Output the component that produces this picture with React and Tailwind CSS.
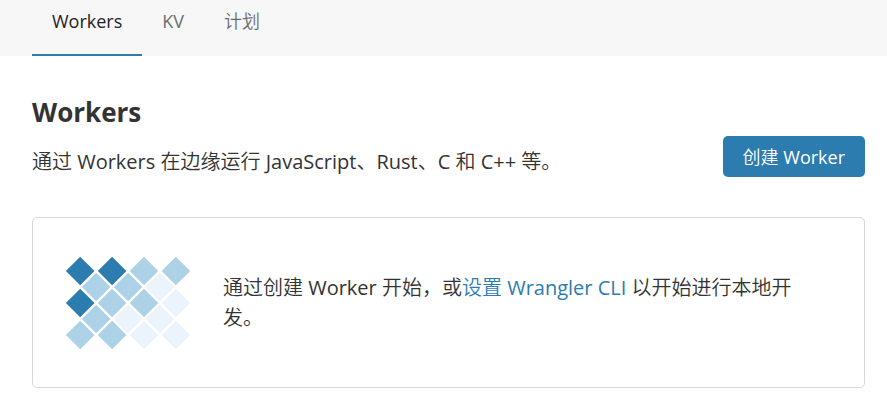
const tabs = [
  { label: "Workers", active: true },
  { label: "KV", active: false },
  { label: "计划", active: false },
];

const shades = {
  dark: "fill-[#2c7cb0]",
  light: "fill-[#add2e8]",
  pale: "fill-[#ebf4fc]",
};

const rows = [
  ["dark", "dark", "light", "light"],
  ["light", "light", "pale"],
  ["dark", "light", "light", "pale"],
  ["light", "pale", "pale"],
  ["light", "light", "pale", "pale"],
];

function DiamondGrid() {
  return (
    <svg className="h-[94px] w-[126px] shrink-0" viewBox="0 0 126 94" aria-hidden="true">
      {rows.map((row, r) =>
        row.map((shade, c) => {
          const x = 15.2 + c * 31.9 + (r % 2) * 16;
          const y = 15 + r * 16;
          return (
            <path
              key={`${r}-${c}`}
              className={shades[shade]}
              d={`M${x} ${y - 14.3}l14.3 14.3l-14.3 14.3l-14.3 -14.3z`}
            />
          );
        })
      )}
    </svg>
  );
}

export default function App() {
  return (
    <div className="bg-white font-['Open_Sans','Noto_Sans_CJK_SC_DemiLight','Noto_Sans_CJK_SC',sans-serif] text-[#333]">
      <nav className="flex h-14 bg-[#f7f7f7] pl-8 text-lg leading-6">
        {tabs.map((tab) => (
          <a
            key={tab.label}
            href="#"
            className={
              tab.active
                ? "border-b-2 border-[#2c7cb0] px-5 pt-[9px] text-[#222]"
                : "border-b-2 border-transparent px-5 pt-[9px] text-[#6b6e70]"
            }
          >
            {tab.label}
          </a>
        ))}
      </nav>

      <main className="pt-9 pr-[22px] pb-6 pl-8">
        <header className="flex items-end justify-between">
          <div>
            <h1 className="text-[26px] leading-10 font-bold">Workers</h1>
            <p className="mt-[15px] text-xl leading-[30px]">
              通过 Workers 在边缘运行 JavaScript、Rust、C 和 C++ 等。
            </p>
          </div>
          <button
            type="button"
            className="h-[41px] shrink-0 rounded-[5px] bg-[#2c7cb0] px-5 text-lg leading-6 text-white"
          >
            创建 Worker
          </button>
        </header>

        <section className="mt-10 flex items-center gap-8 rounded-[5px] border border-[#d5d7d8] pt-[38px] pr-12 pb-[37px] pl-8">
          <DiamondGrid />
          <p className="text-xl leading-[30px]">
            通过创建 Worker 开始，或
            <a href="#" className="text-[#2c7cb0]">
              设置 Wrangler CLI
            </a>{" "}
            以开始进行本地开发。
          </p>
        </section>
      </main>
    </div>
  );
}
